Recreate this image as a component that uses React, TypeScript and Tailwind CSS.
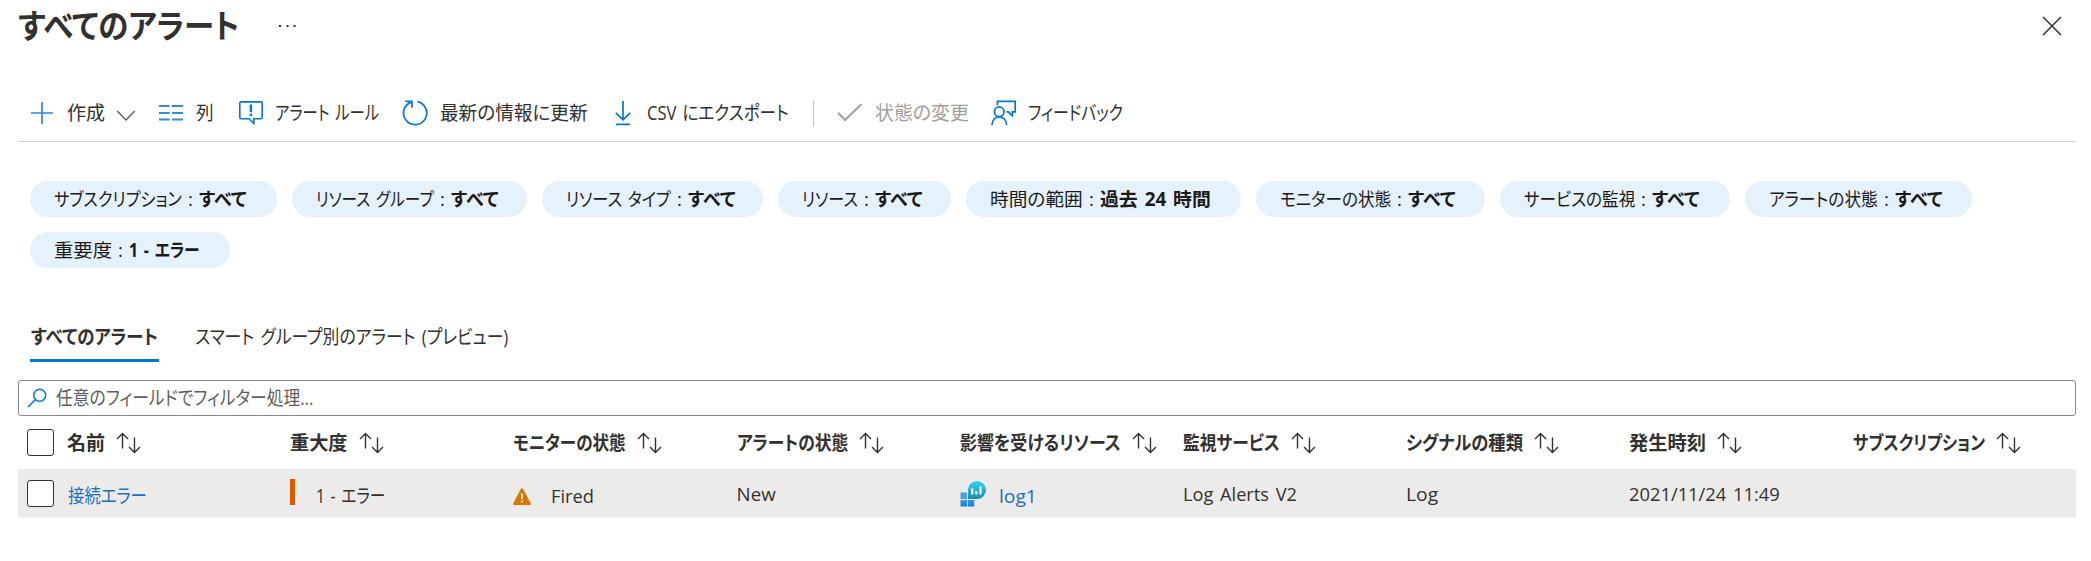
import { useLayoutEffect, useRef } from "react";

/* Text condensed or widened horizontally so that it fills the width given by its class. */
function Fit({ text, className }: { text: string; className: string }) {
  const box = useRef<HTMLSpanElement>(null);
  const inner = useRef<HTMLSpanElement>(null);
  useLayoutEffect(() => {
    if (!box.current || !inner.current) return;
    const ratio = box.current.clientWidth / inner.current.offsetWidth;
    inner.current.style.transform = `scaleX(${ratio})`;
  }, []);
  return (
    <span ref={box} className={`block shrink-0 whitespace-nowrap ${className}`}>
      <span ref={inner} className="inline-block origin-left">
        {text}
      </span>
    </span>
  );
}

const PlusIcon = () => (
  <svg width="24" height="24" viewBox="0 0 24 24" fill="none" stroke="#2b88d8" strokeWidth="1.7">
    <path d="M12 1v22M1 12h22" />
  </svg>
);
const ColumnsIcon = () => (
  <svg width="24" height="24" viewBox="0 0 24 24" fill="none" stroke="#2b8ddd" strokeWidth="1.8">
    <path d="M0 5h10.6M13 5h11M0 12h10.6M13 12h11M0 18.5h10.6M13 18.5h11" />
  </svg>
);
const AlertIcon = () => (
  <svg width="24" height="24" viewBox="0 0 24 24" fill="none" stroke="#0078d4" strokeWidth="1.6">
    <path d="M2 .9h20q1.2 0 1.2 1.2v14.5q0 1.2-1.2 1.2h-7.2v4.7L10 17.8H2q-1.2 0-1.2-1.2V2.1Q.8.9 2 .9z" />
    <path d="M11.9 3.6v7.6M11.9 12.8v2.4" strokeWidth="2.4" />
  </svg>
);
const RefreshIcon = () => (
  <svg width="26" height="26" viewBox="0 0 26 26" fill="none" stroke="#0078d4" strokeWidth="1.7">
    <path d="M15.5 1.7A11.6 11.6 0 1 1 9.3 2.1" />
    <path d="M3.3 1.3h6.6v6.5" />
  </svg>
);
const DownloadIcon = () => (
  <svg width="16" height="26" viewBox="0 0 16 26" fill="none" stroke="#0078d4" strokeWidth="1.7">
    <path d="M8 1v18.5M.8 12.8 8 19.8l7.2-7M1 24.4h14" />
  </svg>
);
const CheckIcon = () => (
  <svg width="26" height="20" viewBox="0 0 26 20" fill="none" stroke="#a19f9d" strokeWidth="2">
    <path d="M1 9.8 8 17 24.4 1.2" />
  </svg>
);
const FeedbackIcon = () => (
  <svg width="26" height="26" viewBox="0 0 26 26" fill="none" stroke="#0078d4" strokeWidth="1.7">
    <path d="M6.4 5.2V1.3h17.8v10.5h-2.9v4l-4-4h-1.8" />
    <circle cx="8.2" cy="11.7" r="4.8" />
    <path d="M1 25c0-5 3.2-8.2 7.2-8.2s7.4 3.2 7.4 8.2" />
  </svg>
);
const SortIcon = () => (
  <svg width="26" height="22" viewBox="0 0 26 22" fill="none" stroke="#323130" strokeWidth="1.4" className="shrink-0">
    <path d="M6.500 1.500v15M1 7l5.500-5.500L12 7M18.500 5.500v15M13 15l5.500 5.500L24 15" />
  </svg>
);
const WarningIcon = () => (
  <svg width="18" height="17" viewBox="0 0 18 17" className="shrink-0">
    <path d="M8 .8q1-1.300 2 0l7.700 14.400q.6 1.500-1 1.800H1.300q-1.600-.3-1-1.800z" fill="#db7500" />
    <path d="M9 5.200v6" stroke="#fff" strokeWidth="1.700" />
    <circle cx="9" cy="13.500" r="1" fill="#fff" />
  </svg>
);
const LogsIcon = () => (
  <svg width="26" height="27" viewBox="0 0 26 27" className="shrink-0">
    <defs>
      <linearGradient id="bubble" x1="0" y1="0" x2="0" y2="1">
        <stop offset="0" stopColor="#32d4f5" />
        <stop offset="1" stopColor="#198ab3" />
      </linearGradient>
      <linearGradient id="tile" x1="0" y1="0" x2="0" y2="1">
        <stop offset="0" stopColor="#3f97e8" />
        <stop offset="1" stopColor="#0f7fd8" />
      </linearGradient>
    </defs>
    <rect x="0.500" y="12.500" width="6.500" height="6.500" fill="#4a9dec" />
    <rect x="0.500" y="20" width="6.500" height="6.500" fill="url(#tile)" />
    <rect x="7.800" y="20" width="6.500" height="6.500" fill="url(#tile)" />
    <path d="M8 19V9.800A9 9 0 1 1 17 19z" fill="url(#bubble)" />
    <path d="M12.300 8.500v6M16.400 11v3.500M20.500 6.500v8" stroke="#fff" strokeWidth="2" />
  </svg>
);

const filters = [
  { label: "サブスクリプション", lw: "w-[128px]", value: "すべて", vw: "w-[47px]", pill: "w-[247px]" },
  { label: "リソース グループ", lw: "w-[118px]", value: "すべて", vw: "w-[47px]", pill: "w-[235px]" },
  { label: "リソース タイプ", lw: "w-[105px]", value: "すべて", vw: "w-[47px]", pill: "w-[221px]" },
  { label: "リソース", lw: "w-[56px]", value: "すべて", vw: "w-[47px]", pill: "w-[173px]" },
  { label: "時間の範囲", lw: "w-[93px]", value: "過去 24 時間", vw: "w-[111px]", pill: "w-[275px]" },
  { label: "モニターの状態", lw: "w-[111px]", value: "すべて", vw: "w-[47px]", pill: "w-[229px]" },
  { label: "サービスの監視", lw: "w-[111px]", value: "すべて", vw: "w-[47px]", pill: "w-[230px]" },
  { label: "アラートの状態", lw: "w-[109px]", value: "すべて", vw: "w-[47px]", pill: "w-[227px]" },
  { label: "重要度", lw: "w-[58px]", value: "1 - エラー", vw: "w-[71px]", pill: "w-[200px]" },
];

const columns = [
  { title: "名前", w: "w-[38px]" },
  { title: "重大度", w: "w-[58px]" },
  { title: "モニターの状態", w: "w-[113px]" },
  { title: "アラートの状態", w: "w-[111px]" },
  { title: "影響を受けるリソース", w: "w-[161px]" },
  { title: "監視サービス", w: "w-[97px]" },
  { title: "シグナルの種類", w: "w-[117px]" },
  { title: "発生時刻", w: "w-[77px]" },
  { title: "サブスクリプション", w: "w-[132px]" },
];

const Checkbox = () => (
  <span className="block h-[27px] w-[27px] shrink-0 rounded-[3px] border border-[#323130] bg-white" />
);

const gridClass = "grid grid-cols-[49px_repeat(9,223.2px)]";

export default function App() {
  return (
    <div className="h-[561px] w-[2091px] overflow-hidden bg-white pr-[15px] pl-[18px] font-['Open_Sans','Noto_Sans_CJK_JP',sans-serif] text-[19.5px] leading-[26px] font-normal text-[#323130] [font-feature-settings:'palt'] [word-spacing:2px]">
      <header className="flex h-[52px] items-center">
        <h1 className="text-[33px] leading-[46px] font-bold">
          <Fit text="すべてのアラート" className="w-[221px]" />
        </h1>
        <svg width="20" height="4" viewBox="0 0 20 4" className="ml-[39px] fill-[#323130]">
          <path d="M1 1h2v2H1zM8.500 1h2v2h-2zM15.500 1h2v2h-2z" />
        </svg>
        <svg width="20" height="20" viewBox="0 0 20 20" className="mr-[14px] ml-auto" fill="none" stroke="#323130" strokeWidth="1.500">
          <path d="m1 1 18 18M19 1 1 19" />
        </svg>
      </header>

      <div className="mt-[32px] flex h-[58px] items-center border-b border-[#d2d0ce] pl-[12px]">
        <PlusIcon />
        <Fit text="作成" className="ml-[13px] w-[38px] pt-px" />
        <svg width="20" height="12" viewBox="0 0 20 12" className="mt-[6px] ml-[11px]" fill="none" stroke="#605e5c" strokeWidth="1.400">
          <path d="m1.200 1 8.800 9 8.800-9" />
        </svg>
        <span className="ml-[23px]"><ColumnsIcon /></span>
        <Fit text="列" className="ml-[13px] w-[18px] pt-px" />
        <span className="ml-[25px]"><AlertIcon /></span>
        <Fit text="アラート ルール" className="ml-[12px] w-[104px] pt-px" />
        <span className="ml-[23px]"><RefreshIcon /></span>
        <Fit text="最新の情報に更新" className="ml-[12px] w-[148px] pt-px" />
        <span className="ml-[27px]"><DownloadIcon /></span>
        <Fit text="CSV にエクスポート" className="ml-[16px] w-[142px] pt-px" />
        <span className="ml-[24px] h-[26px] w-px bg-[#c8c6c4]" />
        <span className="ml-[23px]"><CheckIcon /></span>
        <Fit text="状態の変更" className="ml-[12px] w-[94px] pt-px text-[#a19f9d]" />
        <span className="ml-[22px]"><FeedbackIcon /></span>
        <Fit text="フィードバック" className="ml-[11px] w-[95px] pt-px" />
      </div>

      <div className="mt-[39px] flex flex-wrap gap-[15px] pr-[80px] pl-[12px] text-[18.7px] text-[#1b1a19]">
        {filters.map((f) => (
          <div key={f.label} className={`flex h-[36px] items-center rounded-full bg-[#e5f1fb] pl-[24px] ${f.pill}`}>
            <Fit text={f.label} className={f.lw} />
            <span className="w-[17px] shrink-0 text-center">:</span>
            <Fit text={f.value} className={`font-bold ${f.vw}`} />
          </div>
        ))}
      </div>

      <nav className="mt-[55px] flex gap-[36px] pl-[12px]">
        <span className="h-[39px] border-b-[3px] border-[#0078d4] px-px">
          <Fit text="すべてのアラート" className="w-[127px] pt-px font-bold" />
        </span>
        <Fit text="スマート グループ別のアラート (プレビュー)" className="w-[313px] pt-px" />
      </nav>

      <div className="mt-[18px] flex h-[36px] items-center rounded-[3px] border border-[#8a8886] pl-[8px] text-[#605e5c]">
        <svg width="20" height="20" viewBox="0 0 20 20" fill="none" stroke="#0078d4" strokeWidth="1.500">
          <circle cx="12.700" cy="7.300" r="6" />
          <path d="M8.400 11.600 1 19" />
        </svg>
        <Fit text="任意のフィールドでフィルター処理..." className="ml-[9px] w-[257px]" />
      </div>

      <div className={`${gridClass} h-[53px] items-center font-bold`}>
        <span className="pl-[9px]"><Checkbox /></span>
        {columns.map((c) => (
          <div key={c.title} className="flex items-center">
            <Fit text={c.title} className={c.w} />
            <span className="ml-[11px]"><SortIcon /></span>
          </div>
        ))}
      </div>

      <div className={`${gridClass} h-[49px] items-center border-b border-[#f3f2f1] bg-[#edebe9]`}>
        <span className="pl-[9px]"><Checkbox /></span>
        <a className="pt-[5px] pl-px text-[#1b6ec2]"><Fit text="接続エラー" className="w-[79px]" /></a>
        <div className="flex items-center">
          <span className="mb-[3px] h-[26px] w-[5px] bg-[#da5800]" />
          <Fit text="1 - エラー" className="mt-[5px] ml-[21px] w-[69px]" />
        </div>
        <div className="flex items-center">
          <span className="mt-[6px]"><WarningIcon /></span>
          <Fit text="Fired" className="mt-[6px] ml-[20px] w-[43px] text-[18.7px]" />
        </div>
        <Fit text="New" className="w-[39px] pt-[2px] text-[18.7px]" />
        <div className="flex items-center">
          <LogsIcon />
          <Fit text="log1" className="mt-[6px] ml-[13px] w-[38px] text-[18.7px] text-[#1b6ec2]" />
        </div>
        <Fit text="Log Alerts V2" className="w-[114px] pt-[2px] text-[18.7px]" />
        <Fit text="Log" className="w-[32px] pt-[2px] text-[18.7px]" />
        <Fit text="2021/11/24 11:49" className="w-[151px] pt-[2px] text-[18.7px]" />
        <span />
      </div>
    </div>
  );
}
